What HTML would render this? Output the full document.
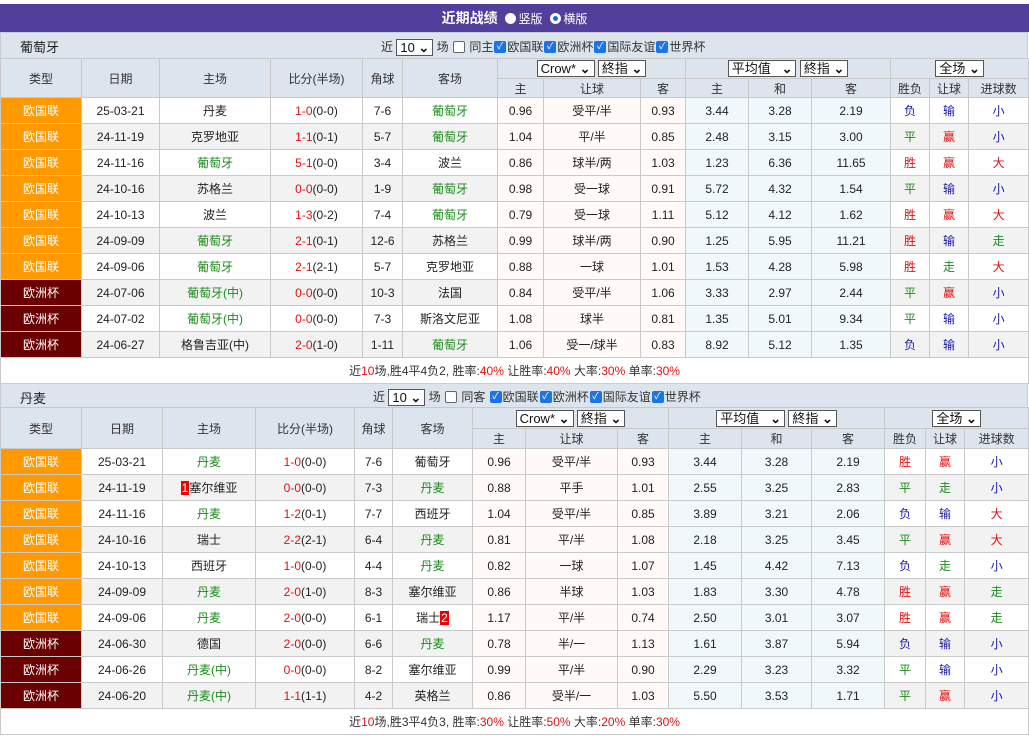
<!DOCTYPE html>
<html><head><meta charset="utf-8">
<style>
*{box-sizing:border-box;margin:0;padding:0}
body{width:1029px;height:736px;background:#fff;font-family:"Liberation Sans","Noto Sans CJK SC",sans-serif;font-size:12px;color:#222;overflow:hidden;position:relative}
.title{position:absolute;left:0;top:4px;width:1029px;height:28px;background:#523f9b;color:#fff;text-align:center;line-height:28px;font-size:14px;font-weight:bold}
.title span{font-weight:normal;font-size:12px}
.rad{display:inline-block;width:11px;height:11px;border-radius:50%;background:#fff;vertical-align:-1px;margin:0 2px 0 4px}
.rad.on{border:3px solid #fff;background:#1a6fd6;box-shadow:0 0 0 1px #1a6fd6 inset}
.bar{position:absolute;left:0;width:1028px;background:#dce4ed;border:1px solid #c8ced6}
.bar .nm{position:absolute;left:19px;font-size:13px;line-height:16px}
.bar .ctl{position:absolute;font-size:12px;color:#333;white-space:nowrap;line-height:16px}
.sel{display:inline-block;border:1px solid #555;background:#fff;padding:0 3px;height:17px;line-height:15px;font-size:13px;vertical-align:middle;color:#111}
.sel:after{content:" ⌄";font-weight:bold}
.cb{display:inline-block;width:12px;height:12px;border:1px solid #666;background:#fff;border-radius:2px;vertical-align:middle;margin:-2px 1px 0;overflow:hidden}
.cb.on{background:#1a73e8;border-color:#1a73e8;color:#fff;font-size:10px;line-height:10px;text-align:center}
table{position:absolute;left:0;border-collapse:collapse;table-layout:fixed;width:1028px}
td{border:1px solid #c9c9c9;text-align:center;white-space:nowrap;overflow:hidden;font-size:12px}
.hd td{background:#dce4ed;color:#333;font-size:12px}
.r td{height:26px}
.r2 td{background:#f2f2f2}
.r td.a{background:#fffaf7}
.r td.e{background:#f1f8fc}
td.ou{background:#f90 !important;color:#fff}
td.eu{background:#6a0000 !important;color:#fff}
.g{color:#1b8a1b}.red{color:#e01010}.b{color:#1a1aa0}
.sum td{height:26px;background:#fff;color:#333}
.sum i{font-style:normal;color:#e01010}
.bx{background:#e00;color:#fff;padding:0 1px}
</style></head><body>
<div class="title">近期战绩 <span class="rad"></span><span>竖版</span> <span class="rad on"></span><span>横版</span></div>

<div class="bar" style="top:32px;height:27px">
<div class="nm" style="top:7px">葡萄牙</div>
<div class="ctl" style="left:380px;top:6px">近 <span class="sel">10</span> 场 <span class="cb"></span> 同主<span class="cb on">✓</span>欧国联<span class="cb on">✓</span>欧洲杯<span class="cb on">✓</span>国际友谊<span class="cb on">✓</span>世界杯</div>
</div>

<table style="top:58px">
<colgroup><col style="width:81px"><col style="width:78px"><col style="width:111px"><col style="width:92px"><col style="width:40px"><col style="width:95px"><col style="width:46px"><col style="width:97px"><col style="width:45px"><col style="width:63px"><col style="width:63px"><col style="width:79px"><col style="width:39px"><col style="width:39px"><col style="width:60px"></colgroup>
<tr class="hd" style="height:20px"><td rowspan="2">类型</td><td rowspan="2">日期</td><td rowspan="2">主场</td><td rowspan="2">比分(半场)</td><td rowspan="2">角球</td><td rowspan="2">客场</td><td colspan="3"><span class="sel">Crow*</span> <span class="sel">終指</span></td><td colspan="3"><span class="sel">平均值 &nbsp;</span> <span class="sel">終指</span></td><td colspan="3"><span class="sel">全场</span></td></tr>
<tr class="hd" style="height:19px"><td>主</td><td>让球</td><td>客</td><td>主</td><td>和</td><td>客</td><td>胜负</td><td>让球</td><td>进球数</td></tr>
<tr class="r"><td class="ou">欧国联</td><td>25-03-21</td><td>丹麦</td><td><span class="red">1-0</span>(0-0)</td><td>7-6</td><td class="g">葡萄牙</td><td class="a">0.96</td><td class="a">受平/半</td><td class="a">0.93</td><td class="e">3.44</td><td class="e">3.28</td><td class="e">2.19</td><td class="b">负</td><td class="b">输</td><td class="b">小</td></tr>
<tr class="r r2"><td class="ou">欧国联</td><td>24-11-19</td><td>克罗地亚</td><td><span class="red">1-1</span>(0-1)</td><td>5-7</td><td class="g">葡萄牙</td><td class="a">1.04</td><td class="a">平/半</td><td class="a">0.85</td><td class="e">2.48</td><td class="e">3.15</td><td class="e">3.00</td><td class="g">平</td><td class="red">赢</td><td class="b">小</td></tr>
<tr class="r"><td class="ou">欧国联</td><td>24-11-16</td><td class="g">葡萄牙</td><td><span class="red">5-1</span>(0-0)</td><td>3-4</td><td>波兰</td><td class="a">0.86</td><td class="a">球半/两</td><td class="a">1.03</td><td class="e">1.23</td><td class="e">6.36</td><td class="e">11.65</td><td class="red">胜</td><td class="red">赢</td><td class="red">大</td></tr>
<tr class="r r2"><td class="ou">欧国联</td><td>24-10-16</td><td>苏格兰</td><td><span class="red">0-0</span>(0-0)</td><td>1-9</td><td class="g">葡萄牙</td><td class="a">0.98</td><td class="a">受一球</td><td class="a">0.91</td><td class="e">5.72</td><td class="e">4.32</td><td class="e">1.54</td><td class="g">平</td><td class="b">输</td><td class="b">小</td></tr>
<tr class="r"><td class="ou">欧国联</td><td>24-10-13</td><td>波兰</td><td><span class="red">1-3</span>(0-2)</td><td>7-4</td><td class="g">葡萄牙</td><td class="a">0.79</td><td class="a">受一球</td><td class="a">1.11</td><td class="e">5.12</td><td class="e">4.12</td><td class="e">1.62</td><td class="red">胜</td><td class="red">赢</td><td class="red">大</td></tr>
<tr class="r r2"><td class="ou">欧国联</td><td>24-09-09</td><td class="g">葡萄牙</td><td><span class="red">2-1</span>(0-1)</td><td>12-6</td><td>苏格兰</td><td class="a">0.99</td><td class="a">球半/两</td><td class="a">0.90</td><td class="e">1.25</td><td class="e">5.95</td><td class="e">11.21</td><td class="red">胜</td><td class="b">输</td><td class="g">走</td></tr>
<tr class="r"><td class="ou">欧国联</td><td>24-09-06</td><td class="g">葡萄牙</td><td><span class="red">2-1</span>(2-1)</td><td>5-7</td><td>克罗地亚</td><td class="a">0.88</td><td class="a">一球</td><td class="a">1.01</td><td class="e">1.53</td><td class="e">4.28</td><td class="e">5.98</td><td class="red">胜</td><td class="g">走</td><td class="red">大</td></tr>
<tr class="r r2"><td class="eu">欧洲杯</td><td>24-07-06</td><td class="g">葡萄牙(中)</td><td><span class="red">0-0</span>(0-0)</td><td>10-3</td><td>法国</td><td class="a">0.84</td><td class="a">受平/半</td><td class="a">1.06</td><td class="e">3.33</td><td class="e">2.97</td><td class="e">2.44</td><td class="g">平</td><td class="red">赢</td><td class="b">小</td></tr>
<tr class="r"><td class="eu">欧洲杯</td><td>24-07-02</td><td class="g">葡萄牙(中)</td><td><span class="red">0-0</span>(0-0)</td><td>7-3</td><td>斯洛文尼亚</td><td class="a">1.08</td><td class="a">球半</td><td class="a">0.81</td><td class="e">1.35</td><td class="e">5.01</td><td class="e">9.34</td><td class="g">平</td><td class="b">输</td><td class="b">小</td></tr>
<tr class="r r2"><td class="eu">欧洲杯</td><td>24-06-27</td><td>格鲁吉亚(中)</td><td><span class="red">2-0</span>(1-0)</td><td>1-11</td><td class="g">葡萄牙</td><td class="a">1.06</td><td class="a">受一/球半</td><td class="a">0.83</td><td class="e">8.92</td><td class="e">5.12</td><td class="e">1.35</td><td class="b">负</td><td class="b">输</td><td class="b">小</td></tr>
<tr class="sum"><td colspan="15">近<i>10</i>场,胜4平4负2, 胜率:<i>40%</i> 让胜率:<i>40%</i> 大率:<i>30%</i> 单率:<i>30%</i></td></tr>
</table>

<div class="bar" style="top:383px;height:25px">
<div class="nm" style="top:7px">丹麦</div>
<div class="ctl" style="left:372px;top:5px">近 <span class="sel">10</span> 场 <span class="cb"></span> 同客 <span class="cb on">✓</span>欧国联<span class="cb on">✓</span>欧洲杯<span class="cb on">✓</span>国际友谊<span class="cb on">✓</span>世界杯</div>
</div>

<table style="top:407px">
<colgroup><col style="width:81px"><col style="width:81px"><col style="width:93px"><col style="width:99px"><col style="width:38px"><col style="width:80px"><col style="width:53px"><col style="width:92px"><col style="width:51px"><col style="width:73px"><col style="width:70px"><col style="width:73px"><col style="width:41px"><col style="width:39px"><col style="width:64px"></colgroup>
<tr class="hd" style="height:21px"><td rowspan="2">类型</td><td rowspan="2">日期</td><td rowspan="2">主场</td><td rowspan="2">比分(半场)</td><td rowspan="2">角球</td><td rowspan="2">客场</td><td colspan="3"><span class="sel">Crow*</span> <span class="sel">終指</span></td><td colspan="3"><span class="sel">平均值 &nbsp;</span> <span class="sel">終指</span></td><td colspan="3"><span class="sel">全场</span></td></tr>
<tr class="hd" style="height:20px"><td>主</td><td>让球</td><td>客</td><td>主</td><td>和</td><td>客</td><td>胜负</td><td>让球</td><td>进球数</td></tr>
<tr class="r"><td class="ou">欧国联</td><td>25-03-21</td><td class="g">丹麦</td><td><span class="red">1-0</span>(0-0)</td><td>7-6</td><td>葡萄牙</td><td class="a">0.96</td><td class="a">受平/半</td><td class="a">0.93</td><td class="e">3.44</td><td class="e">3.28</td><td class="e">2.19</td><td class="red">胜</td><td class="red">赢</td><td class="b">小</td></tr>
<tr class="r r2"><td class="ou">欧国联</td><td>24-11-19</td><td><span class="bx">1</span>塞尔维亚</td><td><span class="red">0-0</span>(0-0)</td><td>7-3</td><td class="g">丹麦</td><td class="a">0.88</td><td class="a">平手</td><td class="a">1.01</td><td class="e">2.55</td><td class="e">3.25</td><td class="e">2.83</td><td class="g">平</td><td class="g">走</td><td class="b">小</td></tr>
<tr class="r"><td class="ou">欧国联</td><td>24-11-16</td><td class="g">丹麦</td><td><span class="red">1-2</span>(0-1)</td><td>7-7</td><td>西班牙</td><td class="a">1.04</td><td class="a">受平/半</td><td class="a">0.85</td><td class="e">3.89</td><td class="e">3.21</td><td class="e">2.06</td><td class="b">负</td><td class="b">输</td><td class="red">大</td></tr>
<tr class="r r2"><td class="ou">欧国联</td><td>24-10-16</td><td>瑞士</td><td><span class="red">2-2</span>(2-1)</td><td>6-4</td><td class="g">丹麦</td><td class="a">0.81</td><td class="a">平/半</td><td class="a">1.08</td><td class="e">2.18</td><td class="e">3.25</td><td class="e">3.45</td><td class="g">平</td><td class="red">赢</td><td class="red">大</td></tr>
<tr class="r"><td class="ou">欧国联</td><td>24-10-13</td><td>西班牙</td><td><span class="red">1-0</span>(0-0)</td><td>4-4</td><td class="g">丹麦</td><td class="a">0.82</td><td class="a">一球</td><td class="a">1.07</td><td class="e">1.45</td><td class="e">4.42</td><td class="e">7.13</td><td class="b">负</td><td class="g">走</td><td class="b">小</td></tr>
<tr class="r r2"><td class="ou">欧国联</td><td>24-09-09</td><td class="g">丹麦</td><td><span class="red">2-0</span>(1-0)</td><td>8-3</td><td>塞尔维亚</td><td class="a">0.86</td><td class="a">半球</td><td class="a">1.03</td><td class="e">1.83</td><td class="e">3.30</td><td class="e">4.78</td><td class="red">胜</td><td class="red">赢</td><td class="g">走</td></tr>
<tr class="r"><td class="ou">欧国联</td><td>24-09-06</td><td class="g">丹麦</td><td><span class="red">2-0</span>(0-0)</td><td>6-1</td><td>瑞士<span class="bx">2</span></td><td class="a">1.17</td><td class="a">平/半</td><td class="a">0.74</td><td class="e">2.50</td><td class="e">3.01</td><td class="e">3.07</td><td class="red">胜</td><td class="red">赢</td><td class="g">走</td></tr>
<tr class="r r2"><td class="eu">欧洲杯</td><td>24-06-30</td><td>德国</td><td><span class="red">2-0</span>(0-0)</td><td>6-6</td><td class="g">丹麦</td><td class="a">0.78</td><td class="a">半/一</td><td class="a">1.13</td><td class="e">1.61</td><td class="e">3.87</td><td class="e">5.94</td><td class="b">负</td><td class="b">输</td><td class="b">小</td></tr>
<tr class="r"><td class="eu">欧洲杯</td><td>24-06-26</td><td class="g">丹麦(中)</td><td><span class="red">0-0</span>(0-0)</td><td>8-2</td><td>塞尔维亚</td><td class="a">0.99</td><td class="a">平/半</td><td class="a">0.90</td><td class="e">2.29</td><td class="e">3.23</td><td class="e">3.32</td><td class="g">平</td><td class="b">输</td><td class="b">小</td></tr>
<tr class="r r2"><td class="eu">欧洲杯</td><td>24-06-20</td><td class="g">丹麦(中)</td><td><span class="red">1-1</span>(1-1)</td><td>4-2</td><td>英格兰</td><td class="a">0.86</td><td class="a">受半/一</td><td class="a">1.03</td><td class="e">5.50</td><td class="e">3.53</td><td class="e">1.71</td><td class="g">平</td><td class="red">赢</td><td class="b">小</td></tr>
<tr class="sum"><td colspan="15">近<i>10</i>场,胜3平4负3, 胜率:<i>30%</i> 让胜率:<i>50%</i> 大率:<i>20%</i> 单率:<i>30%</i></td></tr>
</table>
</body></html>
